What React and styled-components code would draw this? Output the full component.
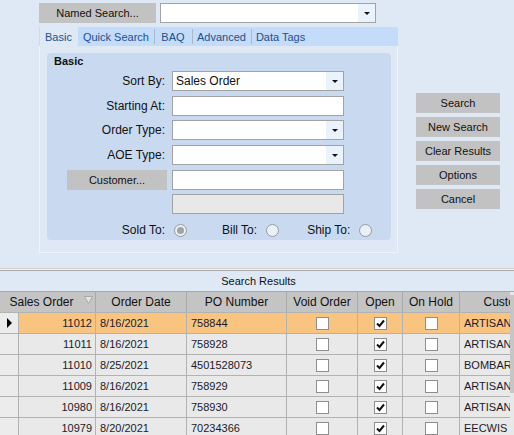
import styled, { createGlobalStyle } from "styled-components";

const GlobalStyle = createGlobalStyle`
  html, body {
    margin: 0;
    padding: 0;
    background: #dfe8f5;
  }
  * {
    box-sizing: border-box;
  }
`;

const rows = [
  { order: "11012", date: "8/16/2021", po: "758844", customer: "ARTISAN", selected: true },
  { order: "11011", date: "8/16/2021", po: "758928", customer: "ARTISAN" },
  { order: "11010", date: "8/25/2021", po: "4501528073", customer: "BOMBAR" },
  { order: "11009", date: "8/16/2021", po: "758929", customer: "ARTISAN" },
  { order: "10980", date: "8/16/2021", po: "758930", customer: "ARTISAN" },
  { order: "10979", date: "8/20/2021", po: "70234366", customer: "EECWIS" },
];

const tabs = [
  { label: "Basic", active: true },
  { label: "Quick Search" },
  { label: "BAQ", sep: true, minW: 38 },
  { label: "Advanced", sep: true },
  { label: "Data Tags", sep: true },
];
const actions = ["Search", "New Search", "Clear Results", "Options", "Cancel"];

const Page = styled.div`
  width: 514px;
  height: 435px;
  overflow: hidden;
  background: #dfe8f5;
  font-family: "Liberation Sans", Arial, sans-serif;
  font-size: 11px;
  color: #111;
`;

const Top = styled.div`
  display: flex;
  height: 268px;
  padding-left: 39px;
`;

const LeftCol = styled.div`
  width: 359px;
  display: flex;
  flex-direction: column;
`;

const NamedRow = styled.div`
  display: flex;
  gap: 4px;
  margin-top: 3px;
  height: 20px;
`;

const GrayButton = styled.div`
  width: ${(p) => p.$w || 84}px;
  height: 20px;
  background: #c2c2c2;
  display: flex;
  align-items: center;
  justify-content: center;
  font-size: 11px;
  color: #111;
  flex-shrink: 0;
`;

const ComboBox = styled.div`
  width: ${(p) => p.$w}px;
  height: ${(p) => p.$h || 20}px;
  background: ${(p) => (p.$disabled ? "#e8e8e8" : "#fff")};
  border: 1px solid #a3a3a3;
  display: flex;
  align-items: center;
  font-size: 12px;
  color: #111;
`;

const ComboText = styled.span`
  flex: 1;
  padding-left: 3px;
`;

const DropButton = styled.span`
  width: 17px;
  align-self: stretch;
  background: #eaf2fc;
  display: flex;
  align-items: center;
  justify-content: center;

  &::after {
    content: "";
    border-left: 3px solid transparent;
    border-right: 3px solid transparent;
    border-top: 3px solid #111;
  }
`;

const TabStrip = styled.div`
  margin-top: 4px;
  height: 19px;
  background: #c4dbf9;
  display: flex;
  align-items: center;
  padding-left: 1px;
`;

const Tab = styled.div`
  height: ${(p) => (p.$active ? 19 : 15)}px;
  min-width: ${(p) => p.$minW || 0}px;
  display: flex;
  align-items: center;
  justify-content: center;
  padding: 0 ${(p) => (p.$active ? 6 : 5)}px 0 ${(p) => (p.$sep ? 4 : 5)}px;
  color: #21508f;
  font-size: 11px;
  white-space: nowrap;
  background: ${(p) => (p.$active ? "#dfe8f5" : "transparent")};
  border-left: ${(p) => (p.$sep ? "1px solid #a9b9c8" : "none")};
`;

const TabPanel = styled.div`
  height: 207px;
  border: 1px solid #eef3fa;
  border-top: none;
  padding: 7px 6px 0 7px;
`;

const GroupBox = styled.div`
  height: 187px;
  background: #c9daf0;
  border-radius: 4px;
  padding: 2px 0 0 0;
`;

const GroupTitle = styled.div`
  font-weight: bold;
  font-size: 11px;
  padding-left: 7px;
  height: 16px;
  line-height: 13px;
  color: #111;
`;

const FormGrid = styled.div`
  display: grid;
  grid-template-columns: 120px 172px;
  column-gap: 5px;
  grid-auto-rows: 20px;
  row-gap: 4.7px;
`;

const FieldLabel = styled.div`
  display: flex;
  align-items: center;
  justify-content: flex-end;
  padding-right: 2px;
  font-size: 12px;
  white-space: nowrap;
  color: #111;
`;

const LabelButton = styled(GrayButton)`
  justify-self: end;
`;

const RadioGrid = styled(FormGrid)`
  grid-auto-rows: 14px;
  margin-top: 9px;
`;

const RadioGroup = styled.div`
  display: flex;
  align-items: center;
  padding-left: 2px;
  font-size: 12px;
  color: #111;
`;

const RadioLabel = styled.span`
  margin-left: ${(p) => p.$gap || 0}px;
  margin-right: 9px;
  white-space: nowrap;
`;

const Radio = styled.span`
  width: 13px;
  height: 13px;
  flex-shrink: 0;
  border-radius: 50%;
  border: 1px solid #9a9a9a;
  background: #e9f0f8;
  display: flex;
  align-items: center;
  justify-content: center;

  &::after {
    content: "";
    width: 7px;
    height: 7px;
    border-radius: 50%;
    background: ${(p) => (p.$checked ? "#a2a2a2" : "transparent")};
  }
`;

const ActionCol = styled.div`
  display: flex;
  flex-direction: column;
  gap: 4px;
  margin-left: 18px;
  padding-top: 93px;
`;

const Divider = styled.div`
  height: 3px;
  border-top: 1px solid #cfcfcf;
  border-bottom: 1px solid #a8a8a8;
  background: #f4f4f4;
`;

const ResultsTitle = styled.div`
  height: 21px;
  display: flex;
  align-items: center;
  justify-content: center;
  padding-left: 3px;
  font-size: 11px;
  color: #111;
  border-bottom: 1px solid #a8a8a8;
`;

const GridWrap = styled.div`
  position: relative;
  width: 514px;
  overflow: hidden;
`;

const GridRow = styled.div`
  display: grid;
  grid-template-columns: 19px 77px 91px 100px 71px 45px 57px 100px;
  width: 560px;
  height: ${(p) => (p.$head ? 20 : 21)}px;
  background: ${(p) => (p.$head ? "#c4c4c4" : "#e9e9e9")};
`;

const HeadCell = styled.div`
  grid-column: ${(p) => p.$span || "auto"};
  display: flex;
  align-items: center;
  justify-content: center;
  padding-right: ${(p) => p.$pr || 0}px;
  font-size: 12px;
  color: #111;
  border-right: 1px solid #a9a9a9;
  position: relative;
  white-space: nowrap;
  overflow: hidden;
`;

const Cell = styled.div`
  display: flex;
  align-items: center;
  justify-content: ${(p) => p.$align || "flex-start"};
  padding: 0 ${(p) => (p.$align === "flex-end" ? 3 : 0)}px 0
    ${(p) => (p.$align === "flex-start" || !p.$align ? 4 : 0)}px;
  border-right: 1px solid #b2b2b2;
  border-top: 1px solid #b2b2b2;
  background: ${(p) => (p.$sel ? "#f8c480" : "transparent")};
  font-size: 11px;
  color: #1a1a2a;
  white-space: nowrap;
  overflow: hidden;
`;

const SelectorCell = styled(Cell)`
  background: #ececec;
  padding: 0 0 0 7px;
`;

const Box = styled.span`
  width: 13px;
  height: 13px;
  background: #fff;
  border: 1px solid #8e8e8e;
  display: flex;
  align-items: center;
  justify-content: center;
`;

const SortIcon = styled.svg`
  position: absolute;
  right: 2px;
  top: 4px;
`;

const Scrollbar = styled.div`
  position: absolute;
  right: 0;
  top: 0;
  width: 4px;
  height: 150px;
  background: #e8e8e8;

  &::before {
    content: "";
    position: absolute;
    left: 0;
    right: 0;
    top: 3px;
    height: 98px;
    background: #c6c6c6;
  }
`;

function Check({ on }) {
  return (
    <Box>
      {on && (
        <svg width="9" height="9" viewBox="0 0 9 9">
          <path d="M1 4.5 L3.5 7 L8 1.5" stroke="#111" strokeWidth="2" fill="none" />
        </svg>
      )}
    </Box>
  );
}

function Combo({ w, value, drop }) {
  return (
    <ComboBox $w={w}>
      <ComboText>{value}</ComboText>
      {drop && <DropButton />}
    </ComboBox>
  );
}

export default function App() {
  return (
    <Page>
      <GlobalStyle />
      <Top>
        <LeftCol>
          <NamedRow>
            <GrayButton $w={117}>Named Search...</GrayButton>
            <Combo w={216} drop />
          </NamedRow>
          <TabStrip>
            {tabs.map((t) => (
              <Tab key={t.label} $active={t.active} $sep={t.sep} $minW={t.minW}>
                {t.label}
              </Tab>
            ))}
          </TabStrip>
          <TabPanel>
            <GroupBox>
              <GroupTitle>Basic</GroupTitle>
              <FormGrid>
                <FieldLabel>Sort By:</FieldLabel>
                <Combo w={172} value="Sales Order" drop />
                <FieldLabel>Starting At:</FieldLabel>
                <Combo w={172} />
                <FieldLabel>Order Type:</FieldLabel>
                <Combo w={172} drop />
                <FieldLabel>AOE Type:</FieldLabel>
                <Combo w={172} drop />
                <LabelButton $w={100}>Customer...</LabelButton>
                <Combo w={172} />
                <span />
                <ComboBox $w={172} $disabled />
              </FormGrid>
              <RadioGrid>
                <FieldLabel>Sold To:</FieldLabel>
                <RadioGroup>
                  <Radio $checked />
                  <RadioLabel $gap={35}>Bill To:</RadioLabel>
                  <Radio />
                  <RadioLabel $gap={28}>Ship To:</RadioLabel>
                  <Radio />
                </RadioGroup>
              </RadioGrid>
            </GroupBox>
          </TabPanel>
        </LeftCol>
        <ActionCol>
          {actions.map((a) => (
            <GrayButton key={a} $w={84}>
              {a}
            </GrayButton>
          ))}
        </ActionCol>
      </Top>
      <Divider />
      <ResultsTitle>Search Results</ResultsTitle>
      <GridWrap>
        <GridRow $head>
          <HeadCell $span="1 / 3" $pr={12}>
            Sales Order
            <SortIcon width="9" height="8" viewBox="0 0 9 8">
              <path d="M0.5 0.5 H8.5 L4.5 7.5 Z" fill="#e4e4e4" stroke="#a8a8a8" />
            </SortIcon>
          </HeadCell>
          <HeadCell>Order Date</HeadCell>
          <HeadCell>PO Number</HeadCell>
          <HeadCell>Void Order</HeadCell>
          <HeadCell>Open</HeadCell>
          <HeadCell>On Hold</HeadCell>
          <HeadCell>Customer</HeadCell>
        </GridRow>
        {rows.map((r) => (
          <GridRow key={r.order}>
            <SelectorCell>
              {r.selected && (
                <svg width="6" height="10" viewBox="0 0 6 10">
                  <path d="M0 0 L5 5 L0 10 Z" fill="#000" />
                </svg>
              )}
            </SelectorCell>
            <Cell $sel={r.selected} $align="flex-end">{r.order}</Cell>
            <Cell $sel={r.selected}>{r.date}</Cell>
            <Cell $sel={r.selected}>{r.po}</Cell>
            <Cell $sel={r.selected} $align="center"><Check /></Cell>
            <Cell $sel={r.selected} $align="center"><Check on /></Cell>
            <Cell $sel={r.selected} $align="center"><Check /></Cell>
            <Cell $sel={r.selected}>{r.customer}</Cell>
          </GridRow>
        ))}
        <Scrollbar />
      </GridWrap>
    </Page>
  );
}
